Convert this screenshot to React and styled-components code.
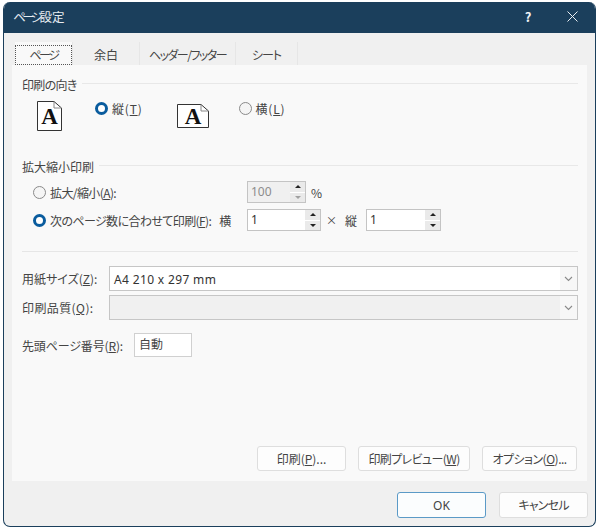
import React from 'react';
import styled, { createGlobalStyle } from 'styled-components';

const GlobalStyle = createGlobalStyle`
  html, body {
    margin: 0;
    background: #fff;
  }
  * {
    box-sizing: border-box;
  }
  body {
    font-family: "Noto Sans CJK JP", "Noto Sans", sans-serif;
    font-size: 12px;
    font-feature-settings: "palt";
    color: #333;
  }
`;

const Page = styled.div`
  width: 599px;
  height: 530px;
  padding: 2px 3px 3px 3px;
`;

const Window = styled.div`
  height: 525px;
  display: flex;
  flex-direction: column;
  background: #f0f0f0;
  border-radius: 7px;
  overflow: hidden;
  border: 1px solid #1b3f5c;
  border-top: 0;
`;

const TitleBar = styled.div`
  height: 31px;
  flex: none;
  display: flex;
  align-items: center;
  padding: 0 17px 2px 9px;
  background: #1b3f5c;
  color: #e6ecf1;
  font-size: 12.5px;
`;

const TitleText = styled.div`
  flex: 1;
`;

const HelpMark = styled.div`
  width: 12px;
  margin-right: 33px;
  font-size: 13px;
  font-weight: 700;
  color: #eef2f5;
  text-align: center;
`;

/* kana in the original UI font runs narrower than in Noto, so runs get tightened by hand */
const Tight = styled.span`
  letter-spacing: ${(p) => p.$ls}px;
`;

const Body = styled.div`
  flex: 1;
  display: flex;
  flex-direction: column;
  padding: 9px 8px 8px 8px;
`;

const Tabs = styled.div`
  display: flex;
  height: 23px;
  flex: none;
  padding-left: 3px;
`;

const Tab = styled.div`
  width: ${(p) => p.$w}px;
  display: flex;
  align-items: center;
  justify-content: center;
  background: ${(p) => (p.$active ? '#f9f9f9' : '#f0f0f0')};
  border-right: 1px solid #e6e6e6;
  color: #444;
  font-size: 12px;
  padding-top: 1px;
`;

const FocusLabel = styled.div`
  width: 58px;
  height: 20px;
  margin-top: 1px;
  display: flex;
  align-items: center;
  justify-content: center;
  border: 1px dotted #555;
`;

const Panel = styled.div`
  height: 416px;
  flex: none;
  display: flex;
  flex-direction: column;
  background: #f9f9f9;
  padding: 10px 9px 10px 10px;
`;

const GroupTitle = styled.div`
  display: flex;
  align-items: center;
  gap: 5px;
  height: 18px;
  color: #444;
  &::after {
    content: '';
    flex: 1;
    height: 1px;
    background: #e8e8e8;
    margin-top: -2px;
  }
`;

const OrientRow = styled.div`
  display: flex;
  height: 50px;
  margin-top: 8px;
  margin-bottom: 6px;
`;

const PageIcon = styled.svg`
  display: block;
  flex: none;
  overflow: visible;
  margin-left: ${(p) => p.$left}px;
  margin-top: ${(p) => p.$top}px;
`;

const RadioLabel = styled.label`
  display: flex;
  align-items: center;
  gap: 4px;
  height: 16px;
  color: #444;
  white-space: nowrap;
  margin-left: ${(p) => p.$left || 0}px;
  margin-top: ${(p) => p.$top || 0}px;
  u {
    text-decoration: underline;
    text-underline-offset: 1px;
  }
`;

const RadioDot = styled.span`
  width: 13px;
  height: 13px;
  flex: none;
  border-radius: 50%;
  background: ${(p) => (p.$on ? '#fff' : '#f5f5f5')};
  border: ${(p) => (p.$on ? '3.5px solid #0a5c9e' : '1px solid #8a8a8a')};
`;

const ScaleRow = styled.div`
  display: flex;
  align-items: center;
  height: 22px;
  margin-top: ${(p) => p.$top}px;
  padding-left: 11px;
  color: #444;
  white-space: nowrap;
`;

const RowLabel = styled(RadioLabel)`
  width: 214px;
  flex: none;
`;

const Spin = styled.div`
  width: ${(p) => p.$w}px;
  height: 22px;
  flex: none;
  display: flex;
  align-items: stretch;
  border: 1px solid #c4c4c4;
  background: ${(p) => (p.$off ? '#f0f0f0' : '#fff')};
`;

const SpinValue = styled.div`
  flex: 1;
  padding-left: 3px;
  line-height: 19px;
  font-family: "Noto Sans", sans-serif;
  color: ${(p) => (p.$off ? '#8c8c8c' : '#333')};
`;

const SpinButtons = styled.div`
  width: 15px;
  display: flex;
  flex-direction: column;
  gap: 1px;
  background: #fff;
`;

const SpinButton = styled.div`
  flex: 1;
  display: flex;
  align-items: center;
  justify-content: center;
  background: #eaeaea;
  color: ${(p) => (p.$off ? '#a0a0a0' : '#222')};
  &::before {
    content: '';
    border-left: 3px solid transparent;
    border-right: 3px solid transparent;
    ${(p) => (p.$down ? 'border-top' : 'border-bottom')}: 3px solid currentColor;
  }
`;

const After = styled.span`
  margin-left: ${(p) => p.$left}px;
  margin-right: ${(p) => p.$right || 0}px;
  color: #444;
`;

const Times = styled(After)`
  font-size: 11px;
`;

const Divider = styled.div`
  height: 1px;
  background: #e6e6e6;
  margin: 20px 0 14px;
`;

const FieldRow = styled.div`
  display: flex;
  align-items: center;
  height: 25px;
  margin-bottom: 4px;
  color: #444;
`;

const FieldLabel = styled.div`
  width: ${(p) => p.$w}px;
  flex: none;
  white-space: nowrap;
  u {
    text-underline-offset: 1px;
  }
`;

const Select = styled.div`
  flex: 1;
  height: 25px;
  display: flex;
  border: 1px solid #c6c6c6;
  background: ${(p) => (p.$off ? '#f0f0f0' : '#fff')};
`;

const SelectValue = styled.div`
  flex: 1;
  padding-left: 4px;
  line-height: 25px;
  font-family: "Noto Sans", sans-serif;
  font-size: 12px;
  letter-spacing: 0.35px;
  color: #333;
`;

const Caret = styled.div`
  width: 17px;
  display: flex;
  align-items: center;
  justify-content: center;
  background: #f7f7f7;
  color: #8a8a8a;
  padding-right: 1px;
`;

const StartRow = styled(FieldRow)`
  margin-top: 9px;
  height: 24px;
`;

const StartInput = styled.div`
  width: 58px;
  height: 24px;
  padding-left: 4px;
  line-height: 19px;
  border: 1px solid #d0d0d0;
  background: #fff;
`;

const PanelActions = styled.div`
  margin-top: auto;
  margin-right: 1px;
  display: flex;
  justify-content: flex-end;
  gap: 12px;
`;

const Button = styled.div`
  width: ${(p) => p.$w}px;
  height: 25px;
  display: flex;
  align-items: center;
  justify-content: center;
  background: #fdfdfd;
  border: 1px solid #dedede;
  border-radius: 3px;
  color: #444;
  white-space: nowrap;
  u {
    text-underline-offset: 1px;
  }
`;

const Footer = styled.div`
  display: flex;
  justify-content: flex-end;
  gap: 13px;
  margin-top: 11px;
  margin-right: -1px;
`;

const FooterButton = styled(Button)`
  height: 26px;
  border-color: ${(p) => (p.$primary ? '#5b9ac7' : '#dedede')};
  background: ${(p) => (p.$primary ? '#fbfdfe' : '#fdfdfd')};
  font-family: "Noto Sans", "Noto Sans CJK JP", sans-serif;
`;

function CloseIcon() {
  return (
    <svg width="11" height="11" viewBox="0 0 11 11">
      <path d="M.5 .5l10 10M10.5 .5l-10 10" stroke="#e9eef2" strokeWidth="1" fill="none" />
    </svg>
  );
}

function SheetIcon({ width, height, left, top, base }) {
  const fold = 7;
  return (
    <PageIcon $left={left} $top={top} width={width} height={height} viewBox={`0 0 ${width} ${height}`}>
      <path
        d={`M.5 .5H${width - fold - 1}L${width - 0.5} ${fold}V${height - 0.5}H.5Z`}
        fill="#fff"
        stroke="#333"
      />
      <path
        d={`M${width - fold - 1} .5V${fold}H${width - 0.5}`}
        fill="none"
        stroke="#888"
      />
      <text
        x={width / 2}
        y={height - base}
        textAnchor="middle"
        fontFamily="Liberation Serif, serif"
        fontWeight="700"
        fontSize="23"
        fill="#111"
      >
        A
      </text>
    </PageIcon>
  );
}

function Spinner({ w, value, off }) {
  return (
    <Spin $w={w} $off={off}>
      <SpinValue $off={off}>{value}</SpinValue>
      <SpinButtons>
        <SpinButton />
        <SpinButton $down $off={off} />
      </SpinButtons>
    </Spin>
  );
}

function Combo({ value, off }) {
  return (
    <Select $off={off}>
      <SelectValue>{value}</SelectValue>
      <Caret>
        <svg width="9" height="6" viewBox="0 0 9 6">
          <path d="M1 1l3.5 3.5L8 1" stroke="currentColor" strokeWidth="1.1" fill="none" />
        </svg>
      </Caret>
    </Select>
  );
}

export default function App() {
  return (
    <Page>
      <GlobalStyle />
      <Window>
        <TitleBar>
          <TitleText>
            <Tight $ls={-3.5}>ページ</Tight>設定
          </TitleText>
          <HelpMark>?</HelpMark>
          <CloseIcon />
        </TitleBar>
        <Body>
          <Tabs>
            <Tab $w={58} $active>
              <FocusLabel>
                <Tight $ls={-2.5}>ページ</Tight>
              </FocusLabel>
            </Tab>
            <Tab $w={67}>余白</Tab>
            <Tab $w={96}>
              <Tight $ls={-1.5}>ヘッダー/フッター</Tight>
            </Tab>
            <Tab $w={62}>
              <Tight $ls={-1}>シート</Tight>
            </Tab>
          </Tabs>
          <Panel>
            <GroupTitle>
              <Tight $ls={-0.7}>印刷の向き</Tight>
            </GroupTitle>
            <OrientRow>
              <SheetIcon width={25} height={30} left={15} top={0} base={7} />
              <RadioLabel $left={33} $top={-1}>
                <RadioDot $on />
                <Tight $ls={0.8}>
                  縦(<u>T</u>)
                </Tight>
              </RadioLabel>
              <SheetIcon width={32} height={24} left={34} top={3} base={4} />
              <RadioLabel $left={30} $top={-1}>
                <RadioDot />
                <Tight $ls={0.8}>
                  横(<u>L</u>)
                </Tight>
              </RadioLabel>
            </OrientRow>
            <GroupTitle>拡大縮小印刷</GroupTitle>
            <ScaleRow $top={6}>
              <RowLabel>
                <RadioDot />
                <Tight $ls={-0.6}>
                  拡大/縮小(<u>A</u>):
                </Tight>
              </RowLabel>
              <Spinner w={59} value="100" off />
              <After $left={5}>%</After>
            </ScaleRow>
            <ScaleRow $top={6}>
              <RowLabel>
                <RadioDot $on />
                <Tight $ls={-0.6}>
                  次のページ数に合わせて印刷(<u>F</u>):
                </Tight>
                <After $left={4}>横</After>
              </RowLabel>
              <Spinner w={74} value="1" />
              <Times $left={5}>×</Times>
              <After $left={8} $right={9}>
                縦
              </After>
              <Spinner w={75} value="1" />
            </ScaleRow>
            <Divider />
            <FieldRow>
              <FieldLabel $w={87}>
                用紙サイズ(<u>Z</u>):
              </FieldLabel>
              <Combo value="A4 210 x 297 mm" />
            </FieldRow>
            <FieldRow>
              <FieldLabel $w={87}>
                <Tight $ls={0.4}>
                  印刷品質(<u>Q</u>):
                </Tight>
              </FieldLabel>
              <Combo off />
            </FieldRow>
            <StartRow>
              <FieldLabel $w={112}>
                <Tight $ls={-0.15}>
                  先頭ページ番号(<u>R</u>):
                </Tight>
              </FieldLabel>
              <StartInput>自動</StartInput>
            </StartRow>
            <PanelActions>
              <Button $w={89}>
                印刷(<u>P</u>)...
              </Button>
              <Button $w={112}>
                <Tight $ls={-0.6}>
                  印刷プレビュー(<u>W</u>)
                </Tight>
              </Button>
              <Button $w={95}>
                <Tight $ls={-0.5}>
                  オプション(<u>O</u>)...
                </Tight>
              </Button>
            </PanelActions>
          </Panel>
          <Footer>
            <FooterButton $w={89} $primary>
              OK
            </FooterButton>
            <FooterButton $w={89}>
              <Tight $ls={-0.8}>キャンセル</Tight>
            </FooterButton>
          </Footer>
        </Body>
      </Window>
    </Page>
  );
}
